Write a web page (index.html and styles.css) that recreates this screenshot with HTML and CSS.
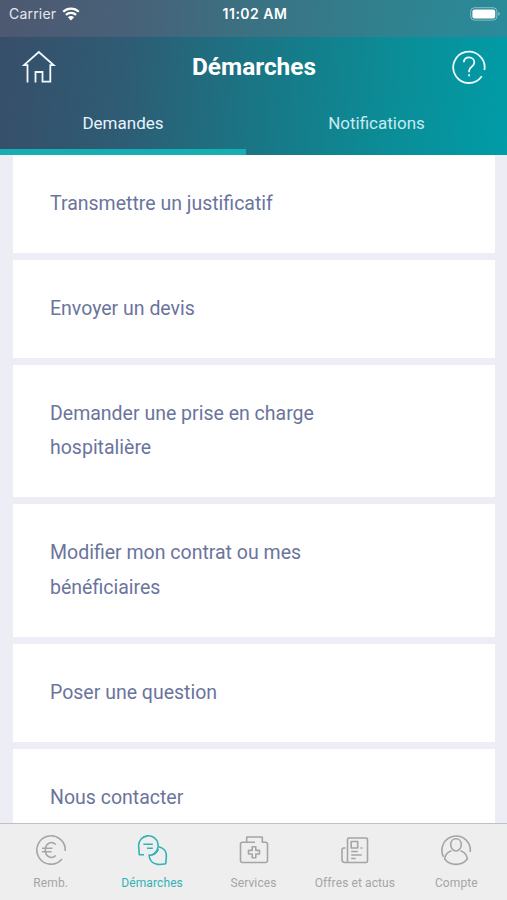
FILE: index.html
```html
<!DOCTYPE html>
<html lang="fr">
<head>
  <meta charset="UTF-8">
  <meta name="viewport" content="width=device-width, initial-scale=1.0">
  <title>Démarches</title>
  <link rel="stylesheet" href="styles.css">
</head>
<body>
  <header class="header">
    <div class="status-bar">
      <div class="carrier">
        <span>Carrier</span>
        <svg class="wifi" viewBox="0 0 18 14">
          <path d="M1.2 4.8C5.6.6 12.4.6 16.8 4.8M3.9 7.9c2.9-2.7 7.3-2.7 10.2 0" fill="none" stroke="#fff" stroke-width="2.2"/>
          <path d="M9 13.4L5.9 10.3c1.8-1.6 4.4-1.6 6.2 0z" fill="#fff"/>
        </svg>
      </div>
      <span class="time">11:02 AM</span>
      <svg class="battery" viewBox="0 0 31 14">
        <rect x=".7" y=".7" width="26.2" height="12.4" rx="3.8" fill="none" stroke="#fff" stroke-opacity=".45"/>
        <rect x="2.4" y="2.4" width="22.8" height="9" rx="2.2" fill="#fff"/>
        <path d="M28.4 4.8c1.8.7 1.8 3.5 0 4.2z" fill="#fff" fill-opacity=".5"/>
      </svg>
    </div>

    <div class="title-bar">
      <svg class="icon-home" viewBox="0 0 34 34">
        <path d="M5.500 32.500V15.200H2L16.800 2l15 13.200h-3.500v16.500h-7.800V22h-7v10.500"/>
      </svg>
      <h1>Démarches</h1>
      <svg class="icon-help" viewBox="0 0 34 34">
        <path d="M32.400 20A15.700 15.700 0 1 0 29.800 26.300"/>
        <path d="M11.800 12.200c0-6.600 10.500-6.400 10.500.2 0 4.600-5.200 4-5.200 8.400v1.400M17.100 24.300v2"/>
      </svg>
    </div>

    <nav class="tabs">
      <a class="tab active" href="#demandes">Demandes</a>
      <a class="tab" href="#notifications">Notifications</a>
    </nav>
  </header>

  <main class="list" id="demandes">
    <a class="card" href="#"><span>Transmettre un justificatif</span></a>
    <a class="card" href="#"><span>Envoyer un devis</span></a>
    <a class="card" href="#"><span>Demander une prise en charge hospitalière</span></a>
    <a class="card" href="#"><span>Modifier mon contrat ou mes bénéficiaires</span></a>
    <a class="card" href="#"><span>Poser une question</span></a>
    <a class="card" href="#"><span>Nous contacter</span></a>
  </main>

  <nav class="bottom-nav">
    <a class="nav-item" href="#">
      <svg viewBox="0 0 32 32">
        <path d="M30.200 17A14.200 14.200 0 1 0 27 25"/>
        <path d="M20.800 10.500c-4.600-4.200-10.500-.9-10.500 5.500s5.900 9.700 10.500 5.500M7 14.300h10.500M7 17.700h9.500"/>
      </svg>
      <span>Remb.</span>
    </a>
    <a class="nav-item active" href="#">
      <svg viewBox="0 0 32 32">
        <path d="M8 20.800H3.300L2.600 11.500A9.800 9.800 0 1 1 15.500 20.900"/>
        <path d="M7.300 10.200h9.500M11 14.200h5.800"/>
        <path d="M22.800 12.800c5 1.200 8 5 7.600 9.700l-.7 7.200c-3 .7-6 .9-8 .7-5-.5-8.500-4-8.600-9.300 4.200.7 8-1.800 9.300-6"/>
      </svg>
      <span>Démarches</span>
    </a>
    <a class="nav-item" href="#">
      <svg viewBox="0 0 32 32">
        <path d="M17 8.200H4.500a2 2 0 0 0-2 2V26.500a2 2 0 0 0 2 2h23a2 2 0 0 0 2-2V10.200a2 2 0 0 0-2-2H24.300V3H8.700v5.200"/>
        <path d="M14.200 12.700h3.600v3.700h3.700V20h-3.700v3.700h-3.600V20h-3.700v-3.600h3.700z"/>
      </svg>
      <span>Services</span>
    </a>
    <a class="nav-item" href="#">
      <svg viewBox="0 0 32 32">
        <path d="M8.500 27.700V5.500A1.500 1.500 0 0 1 10 4h17a1.500 1.500 0 0 1 1.500 1.500V27a1.500 1.500 0 0 1-1.500 1.500H6A3 3 0 0 1 3 25.500V16a2 2 0 0 1 2-2h1.500"/>
        <path d="M12.200 7.500h6.500V14h-6.500zM12.200 17.500h6.500M12.200 21h10.500M12.200 24.500h4.500M21.500 14h2"/>
      </svg>
      <span>Offres et actus</span>
    </a>
    <a class="nav-item" href="#">
      <svg viewBox="0 0 32 32">
        <path d="M30.200 18A14.200 14.200 0 1 0 3.500 22.800"/>
        <path d="M16 4.800c3.300 0 5.300 2.500 5.300 5.700S19 17 16 17s-5.300-3.300-5.300-6.500 2-5.700 5.300-5.700z"/>
        <path d="M11.500 16.800c-3.800 1-6.200 4.400-7 8 5.600 7.400 17.400 7.400 23 0-.8-3.600-3.200-7-7-8"/>
      </svg>
      <span>Compte</span>
    </a>
  </nav>
</body>
</html>
```
FILE: styles.css
```css
* {
  box-sizing: border-box;
}

body {
  font-family: Roboto, "Liberation Sans", sans-serif;
  margin: 0;
  height: 100vh;
  display: flex;
  flex-direction: column;
  overflow: hidden;
  background-color: #ecedf5;
}

a {
  text-decoration: none;
}

/* Header */
.header {
  flex: none;
  height: 155px;
  display: flex;
  flex-direction: column;
  color: white;
  background: linear-gradient(95deg, #384e69 0%, #2e5c74 25%, #1a7584 50%, #0b8d97 77%, #009ca7 100%);
}

.status-bar {
  height: 37px;
  padding: 0 6px 10px 9px;
  display: grid;
  grid-template-columns: 1fr auto 1fr;
  align-items: center;
  background-color: rgba(125, 110, 130, 0.33);
  font-family: Inter, sans-serif;
  font-size: 14px;
}
.carrier {
  display: flex;
  align-items: center;
  gap: 6px;
  color: #e4e8ed;
  letter-spacing: 0.2px;
}
.wifi {
  width: 18px;
  height: 14px;
}
.time {
  font-size: 14px;
  font-weight: 600;
  letter-spacing: 0.5px;
}
.battery {
  width: 31px;
  height: 14px;
  justify-self: end;
}

.title-bar {
  height: 60px;
  padding: 0 21px 0 22px;
  display: flex;
  align-items: center;
  justify-content: space-between;
}
.title-bar h1 {
  margin: 0;
  padding-bottom: 1px;
  font-size: 24.4px;
  font-weight: bold;
}
.title-bar svg {
  width: 34px;
  height: 34px;
  fill: none;
  stroke: #eefaff;
  stroke-width: 1.8;
}

.tabs {
  flex: 1;
  display: flex;
}
.tab {
  flex: 1;
  padding-top: 16px;
  text-align: center;
  color: #c5ebf0;
  font-size: 17px;
  line-height: 20px;
}
.tab.active {
  flex: 0 0 246px;
  color: #e8f4fa;
  border-bottom: 6px solid #16adb3;
}

/* List */
.list {
  flex: 1;
  min-height: 0;
  padding: 0 12px 0 13px;
  display: flex;
  flex-direction: column;
  gap: 7px;
  overflow: hidden;
}
.card {
  flex: none;
  padding: 32px 37px 31.6px;
  background-color: white;
  color: #6b749d;
  font-size: 19.5px;
  line-height: 34.4px;
}
.card span {
  display: block;
  max-width: 285px;
}

/* Bottom navigation */
.bottom-nav {
  flex: none;
  height: 77px;
  display: flex;
  border-top: 1px solid #c0c1c5;
  background-color: #eeeeee;
}
.nav-item {
  flex: 1;
  padding-top: 10px;
  display: flex;
  flex-direction: column;
  align-items: center;
  gap: 9px;
  color: #a5a5a5;
  font-size: 12px;
  line-height: 16px;
  letter-spacing: 0.1px;
}
.nav-item.active {
  color: #31b2b4;
}
.nav-item svg {
  width: 32px;
  height: 32px;
  fill: none;
  stroke: currentColor;
  stroke-width: 1.6;
  stroke-linejoin: round;
}
```
